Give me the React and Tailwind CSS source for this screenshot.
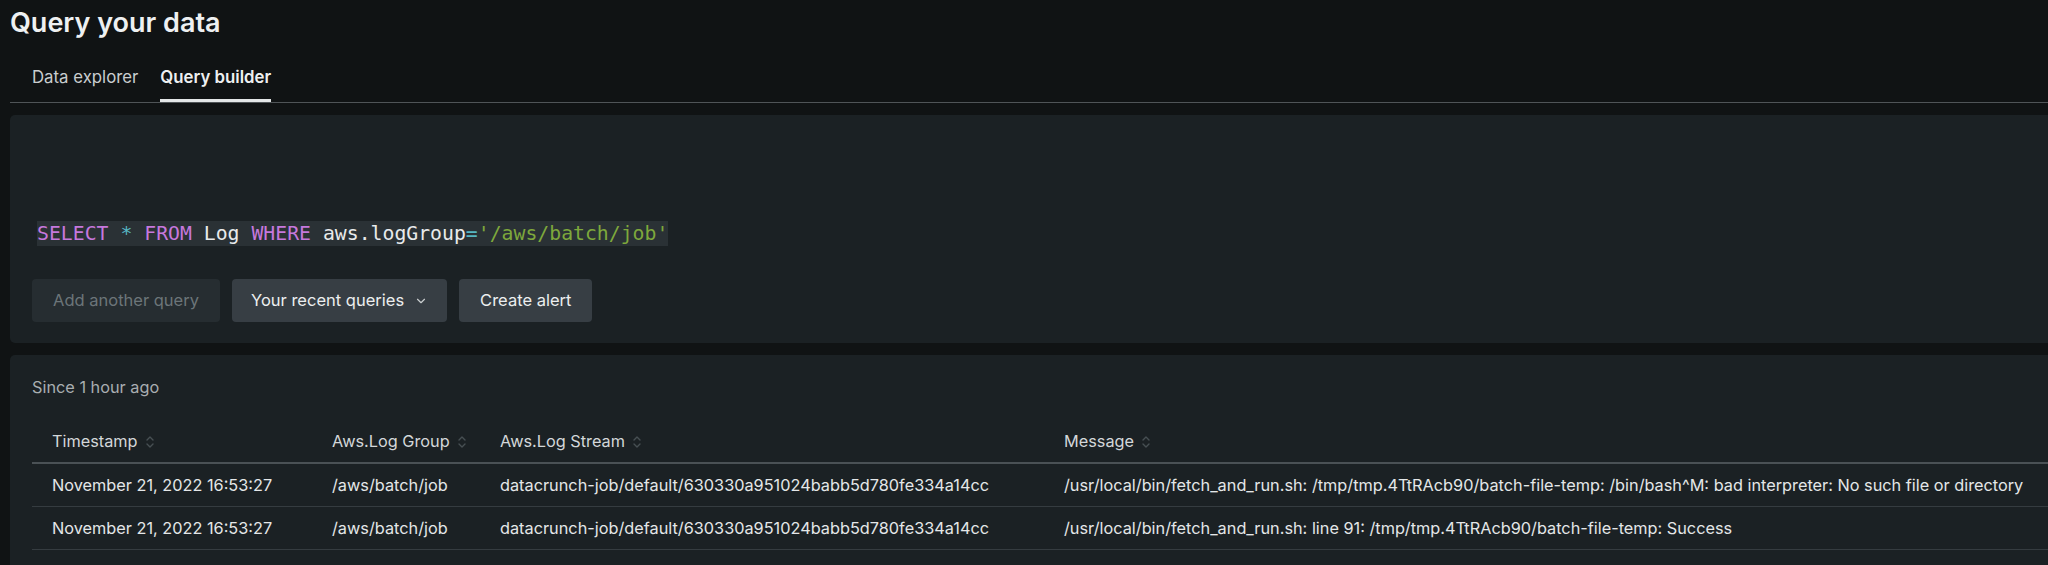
import { ChevronDown } from "lucide-react";

const SortIcon = () => (
  <svg width="8" height="14" viewBox="0 0 8 14" fill="none" className="text-[#474f53]">
    <path d="M1 5 L4 2 L7 5" stroke="currentColor" strokeWidth="1.4" strokeLinecap="round" strokeLinejoin="round" />
    <path d="M1 9 L4 12 L7 9" stroke="currentColor" strokeWidth="1.4" strokeLinecap="round" strokeLinejoin="round" />
  </svg>
);

const columns = [
  { label: "Timestamp", w: "w-[280px]" },
  { label: "Aws.Log Group", w: "w-[168px]" },
  { label: "Aws.Log Stream", w: "w-[564px]" },
  { label: "Message", w: "flex-1" },
];

const rows = [
  [
    "November 21, 2022 16:53:27",
    "/aws/batch/job",
    "datacrunch-job/default/630330a951024babb5d780fe334a14cc",
    "/usr/local/bin/fetch_and_run.sh: /tmp/tmp.4TtRAcb90/batch-file-temp: /bin/bash^M: bad interpreter: No such file or directory",
  ],
  [
    "November 21, 2022 16:53:27",
    "/aws/batch/job",
    "datacrunch-job/default/630330a951024babb5d780fe334a14cc",
    "/usr/local/bin/fetch_and_run.sh: line 91: /tmp/tmp.4TtRAcb90/batch-file-temp: Success",
  ],
];

const App = () => {
  return (
    <div className="h-[565px] overflow-hidden bg-[#101314] font-['Inter',sans-serif] text-[#e6e8e9]">
      <h1 className="pl-[10px] pt-[6px] text-[27px] font-semibold leading-[34px] text-[#eef0f1]">
        Query your data
      </h1>

      {/* tabs */}
      <div className="ml-[10px] flex gap-[22px] border-b border-[#4f5457] pl-[22px] pt-[27px] text-[16.8px] leading-[20px]">
        <div className="border-b-[3px] border-transparent pb-[12px] text-[#c9cdcf]">Data explorer</div>
        <div className="border-b-[3px] border-[#e3e6e7] pb-[12px] font-semibold text-[#eef0f1]">Query builder</div>
      </div>

      {/* query panel */}
      <div className="ml-[10px] mt-[12px] flex h-[228px] flex-col rounded-l-[5px] bg-[#1b2124] pl-[22px]">
        <div className="mt-[106px] ml-[5px] flex">
          <div className="bg-[#2a3135] font-['DejaVu_Sans_Mono',monospace] text-[19.8px] leading-[25px] whitespace-pre">
            <span className="text-[#c678dd]">SELECT</span>{" "}
            <span className="text-[#56b6c2]">*</span>{" "}
            <span className="text-[#c678dd]">FROM</span>{" "}
            <span className="text-[#e8eaeb]">Log</span>{" "}
            <span className="text-[#c678dd]">WHERE</span>{" "}
            <span className="text-[#e8eaeb]">aws.logGroup</span>
            <span className="text-[#56b6c2]">=</span>
            <span className="text-[#7ea83c]">'/aws/batch/job'</span>
          </div>
        </div>

        <div className="mt-[33px] flex gap-3 text-[16.5px]">
          <button className="h-[43px] rounded-[4px] bg-[#262d31] px-[21px] text-[#6c7579]">
            Add another query
          </button>
          <button className="flex h-[43px] items-center gap-[10px] rounded-[4px] bg-[#373e44] px-[19px] text-[#eceeef]">
            Your recent queries
            <ChevronDown size={14} strokeWidth={2} className="text-[#c9cdcf]" />
          </button>
          <button className="h-[43px] rounded-[4px] bg-[#373e44] px-[21px] text-[#eceeef]">
            Create alert
          </button>
        </div>
      </div>

      {/* results panel */}
      <div className="ml-[10px] mt-[12px] h-[300px] rounded-l-[5px] bg-[#1b2124] pl-[22px] pt-[22px] text-[16.3px]">
        <div className="leading-[20px] text-[#a9aeb1]">Since 1 hour ago</div>

        <div className="mt-[24px]">
          <div className="flex h-[43px] items-center border-b-2 border-[#4a5155] text-[#d3d7d9]">
            {columns.map((c) => (
              <div key={c.label} className={`${c.w} flex shrink-0 items-center gap-2 pl-5`}>
                <span>{c.label}</span>
                <SortIcon />
              </div>
            ))}
          </div>
          {rows.map((r, i) => (
            <div key={i} className="flex h-[43px] items-center border-b border-[#353c40] text-[#e4e7e8]">
              {r.map((cell, j) => (
                <div key={j} className={`${columns[j].w} shrink-0 whitespace-nowrap pl-5`}>
                  {cell}
                </div>
              ))}
            </div>
          ))}
        </div>
      </div>
    </div>
  );
};

export default App;
